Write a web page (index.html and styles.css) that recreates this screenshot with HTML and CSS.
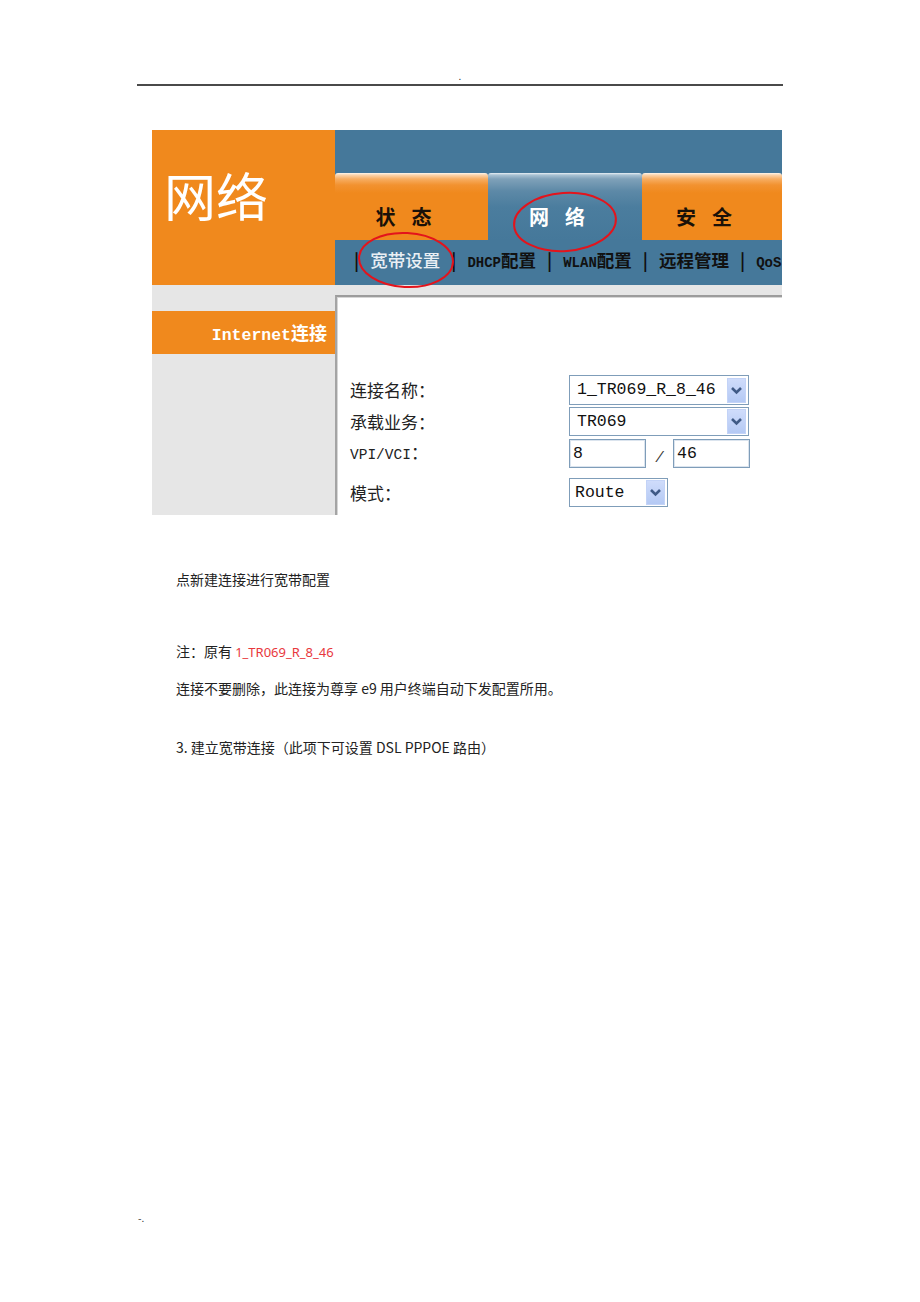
FILE: index.html
```html
<!DOCTYPE html>
<html lang="zh-CN">
<head>
<meta charset="utf-8">
<title>网络 - 宽带设置</title>
<link rel="stylesheet" href="styles.css">
</head>
<body>
<div class="page">
  <header class="doc-head"><span class="dot">.</span></header>

  <div class="shot">
    <div class="brand">网络</div>
    <div class="topnav">
      <div class="topbar"></div>
      <div class="tabs">
        <div class="tab tab-orange">状态</div>
        <div class="tab tab-blue">网络</div>
        <div class="tab tab-orange tab-last">安全</div>
      </div>
      <div class="subnav">
        <span class="sep">|</span>
        <span class="sub current">宽带设置</span>
        <span class="sep">|</span>
        <span class="sub"><span class="lat">DHCP</span>配置</span>
        <span class="sep">|</span>
        <span class="sub"><span class="lat">WLAN</span>配置</span>
        <span class="sep">|</span>
        <span class="sub">远程管理</span>
        <span class="sep">|</span>
        <span class="sub"><span class="lat">QoS</span></span>
      </div>
    </div>
    <div class="sidebar">
      <div class="side-item"><span class="lat-side">Internet</span>连接</div>
    </div>
    <div class="content">
      <div class="panel">
        <div class="form">
          <div class="label">连接名称：</div>
          <div class="field">
            <div class="select sel-wide sel-tall"><span>1_TR069_R_8_46</span><i class="arrow"><svg viewBox="0 0 19 25" width="19" height="25"><polyline points="5,10 9.5,14.5 14,10" fill="none" stroke="#3f5a86" stroke-width="2.6"/></svg></i></div>
          </div>
          <div class="label">承载业务：</div>
          <div class="field">
            <div class="select sel-wide"><span>TR069</span><i class="arrow"><svg viewBox="0 0 19 25" width="19" height="25"><polyline points="5,10 9.5,14.5 14,10" fill="none" stroke="#3f5a86" stroke-width="2.6"/></svg></i></div>
          </div>
          <div class="label"><span class="lat-label">VPI/VCI</span>：</div>
          <div class="field pair">
            <div class="input">8</div>
            <span class="slash">/</span>
            <div class="input">46</div>
          </div>
          <div class="label row-gap">模式：</div>
          <div class="field row-gap">
            <div class="select sel-short"><span>Route</span><i class="arrow"><svg viewBox="0 0 19 25" width="19" height="25"><polyline points="5,10 9.5,14.5 14,10" fill="none" stroke="#3f5a86" stroke-width="2.6"/></svg></i></div>
          </div>
        </div>
      </div>
    </div>
    <svg class="marks" width="630" height="200" viewBox="0 0 630 200">
      <ellipse cx="413" cy="92" rx="51" ry="29" transform="rotate(-4 413 92)" fill="none" stroke="#e3141c" stroke-width="2"/>
      <ellipse cx="254" cy="130" rx="47" ry="27" transform="rotate(3 254 130)" fill="none" stroke="#e3141c" stroke-width="2"/>
    </svg>
  </div>

  <div class="notes">
    <p class="n1">点新建连接进行宽带配置</p>
    <p class="n2">注：原有 <span class="red">1_TR069_R_8_46</span></p>
    <p class="n3">连接不要删除，此连接为尊享 e9 用户终端自动下发配置所用。</p>
    <p class="n4">3. 建立宽带连接（此项下可设置 DSL PPPOE 路由）</p>
  </div>

  <footer class="doc-foot">-.</footer>
</div>
</body>
</html>
```

FILE: styles.css
```css
* { box-sizing: border-box; }

html, body {
  margin: 0;
  padding: 0;
  background: #ffffff;
}

body {
  font-family: "Noto Sans CJK SC", "Noto Sans", sans-serif;
  color: #222222;
}

.page {
  width: 920px;
  height: 1302px;
  overflow: hidden;
  display: flex;
  flex-direction: column;
}

/* ---------- document header ---------- */
.doc-head {
  margin-left: 137px;
  width: 646px;
  height: 86px;
  border-bottom: 2px solid #4a4a4a;
  display: flex;
  justify-content: center;
  align-items: flex-end;
}

.dot {
  font-size: 10px;
  line-height: 12px;
  margin-bottom: 2px;
  color: #333;
}

/* ---------- router screenshot ---------- */
.shot {
  position: relative;
  margin-top: 44px;
  margin-left: 152px;
  width: 630px;
  height: 385px;
  overflow: hidden;
  display: grid;
  grid-template-columns: 183px 447px;
  grid-template-rows: 155px 230px;
}

.brand {
  background: #f0891d;
  color: #ffffff;
  font-size: 52px;
  line-height: 52px;
  padding-top: 39px;
  padding-left: 12px;
  font-weight: 400;
}

.topnav {
  display: flex;
  flex-direction: column;
}

.topbar {
  height: 43px;
  background: #45789a;
}

.tabs {
  height: 67px;
  display: flex;
  background: #45789a;
}

.tab {
  height: 67px;
  padding-top: 32px;
  line-height: 24px;
  font-size: 20px;
  font-weight: 700;
  text-align: center;
  letter-spacing: 16px;
  border-radius: 3px 3px 0 0;
}

.tab:nth-child(1) { width: 153px; }
.tab:nth-child(2) { width: 154px; }
.tab:nth-child(3) { width: 140px; }

.tab-orange {
  color: #1a1108;
  background: linear-gradient(#fff6ec 0, #fbd4ac 2px, #f7ad62 6px, #f29230 12px, #f0891d 20px, #f0891d 100%);
}

.tab-blue {
  color: #ffffff;
  background: linear-gradient(#e9f0f5 0, #a9c2d3 2px, #7fa1b9 6px, #5d89a7 18px, #4b7d9e 34px, #45789a 100%);
}

.subnav {
  height: 45px;
  background: #45789a;
  padding-top: 8px;
  padding-left: 19px;
  display: flex;
  align-items: flex-start;
  white-space: nowrap;
  font-size: 17.5px;
  line-height: 24px;
  font-weight: 700;
  color: #111111;
}

.sep {
  margin: 0 11px;
  font-weight: 700;
  color: #101010;
}

.sep:first-child { margin-left: 0; }

.sub.current {
  color: #e9eff4;
  font-weight: 500;
}

.lat {
  font-family: "Liberation Mono", monospace;
  font-size: 14px;
  font-weight: 700;
}

.sidebar {
  background: #e6e6e6;
  padding-top: 26px;
}

.side-item {
  height: 43px;
  background: #f0891d;
  color: #ffffff;
  font-weight: 700;
  font-size: 18px;
  line-height: 43px;
  text-align: right;
  padding-right: 8px;
}

.lat-side {
  font-family: "Liberation Mono", monospace;
  font-size: 16.5px;
  font-weight: 700;
}

.content {
  background: #e6e6e6;
  padding-top: 10px;
}

.panel {
  height: 100%;
  background: #ffffff;
  border-top: 2px solid #9c9c9c;
  border-left: 2px solid #a4a4a4;
  box-shadow: inset 1px 1px 0 #d6d6d6;
  padding-top: 78px;
  padding-left: 13px;
}

.form {
  display: grid;
  grid-template-columns: 219px auto;
  row-gap: 2px;
  align-items: center;
}

.label {
  font-size: 17px;
  line-height: 24px;
  color: #222222;
}

.lat-label {
  font-family: "Liberation Mono", monospace;
  font-size: 14.5px;
}

.field {
  display: flex;
  align-items: center;
}

.row-gap { margin-top: 8px; }

.select {
  position: relative;
  height: 29px;
  border: 1px solid #7f9db9;
  background: #ffffff;
  font-family: "Liberation Mono", monospace;
  font-size: 16.5px;
  line-height: 27px;
  color: #111;
  padding-left: 7px;
  white-space: nowrap;
}

.sel-tall { height: 30px; line-height: 28px; }
.sel-wide { width: 180px; }
.sel-short { width: 99px; padding-left: 5px; }

.arrow {
  position: absolute;
  right: 2px;
  top: 50%;
  margin-top: -12.5px;
  width: 19px;
  height: 25px;
  background: linear-gradient(#cfdcfb, #b4c9f4);
  border: 1px solid #c3d3f7;
  display: block;
}

.arrow svg {
  position: absolute;
  left: -1px;
  top: -1px;
}

.pair { margin-top: 1px; }

.input {
  width: 77px;
  height: 29px;
  border: 1px solid #7f9db9;
  box-shadow: inset 0 0 0 1px #dbe4ee;
  font-family: "Liberation Mono", monospace;
  font-size: 16.5px;
  line-height: 27px;
  padding-left: 3px;
  color: #111;
}

.slash {
  width: 27px;
  text-align: center;
  font-family: "Liberation Mono", monospace;
  font-size: 14px;
  padding-top: 8px;
  color: #333;
  font-style: italic;
}

.marks {
  position: absolute;
  left: 0;
  top: 0;
  pointer-events: none;
}

/* ---------- notes ---------- */
.notes {
  margin-left: 176px;
  font-size: 14px;
  line-height: 20px;
  color: #222222;
}

.notes p { margin: 0; }
.notes .n1 { margin-top: 54px; }
.notes .n2 { margin-top: 52px; }
.notes .n3 { margin-top: 16px; }
.notes .n4 { margin-top: 39px; }

.red {
  color: #e8383d;
  font-family: "Noto Sans", sans-serif;
  font-size: 13px;
}

/* ---------- footer ---------- */
.doc-foot {
  margin-top: auto;
  margin-bottom: 78px;
  margin-left: 138px;
  font-size: 10px;
  line-height: 12px;
  color: #333;
}
```
